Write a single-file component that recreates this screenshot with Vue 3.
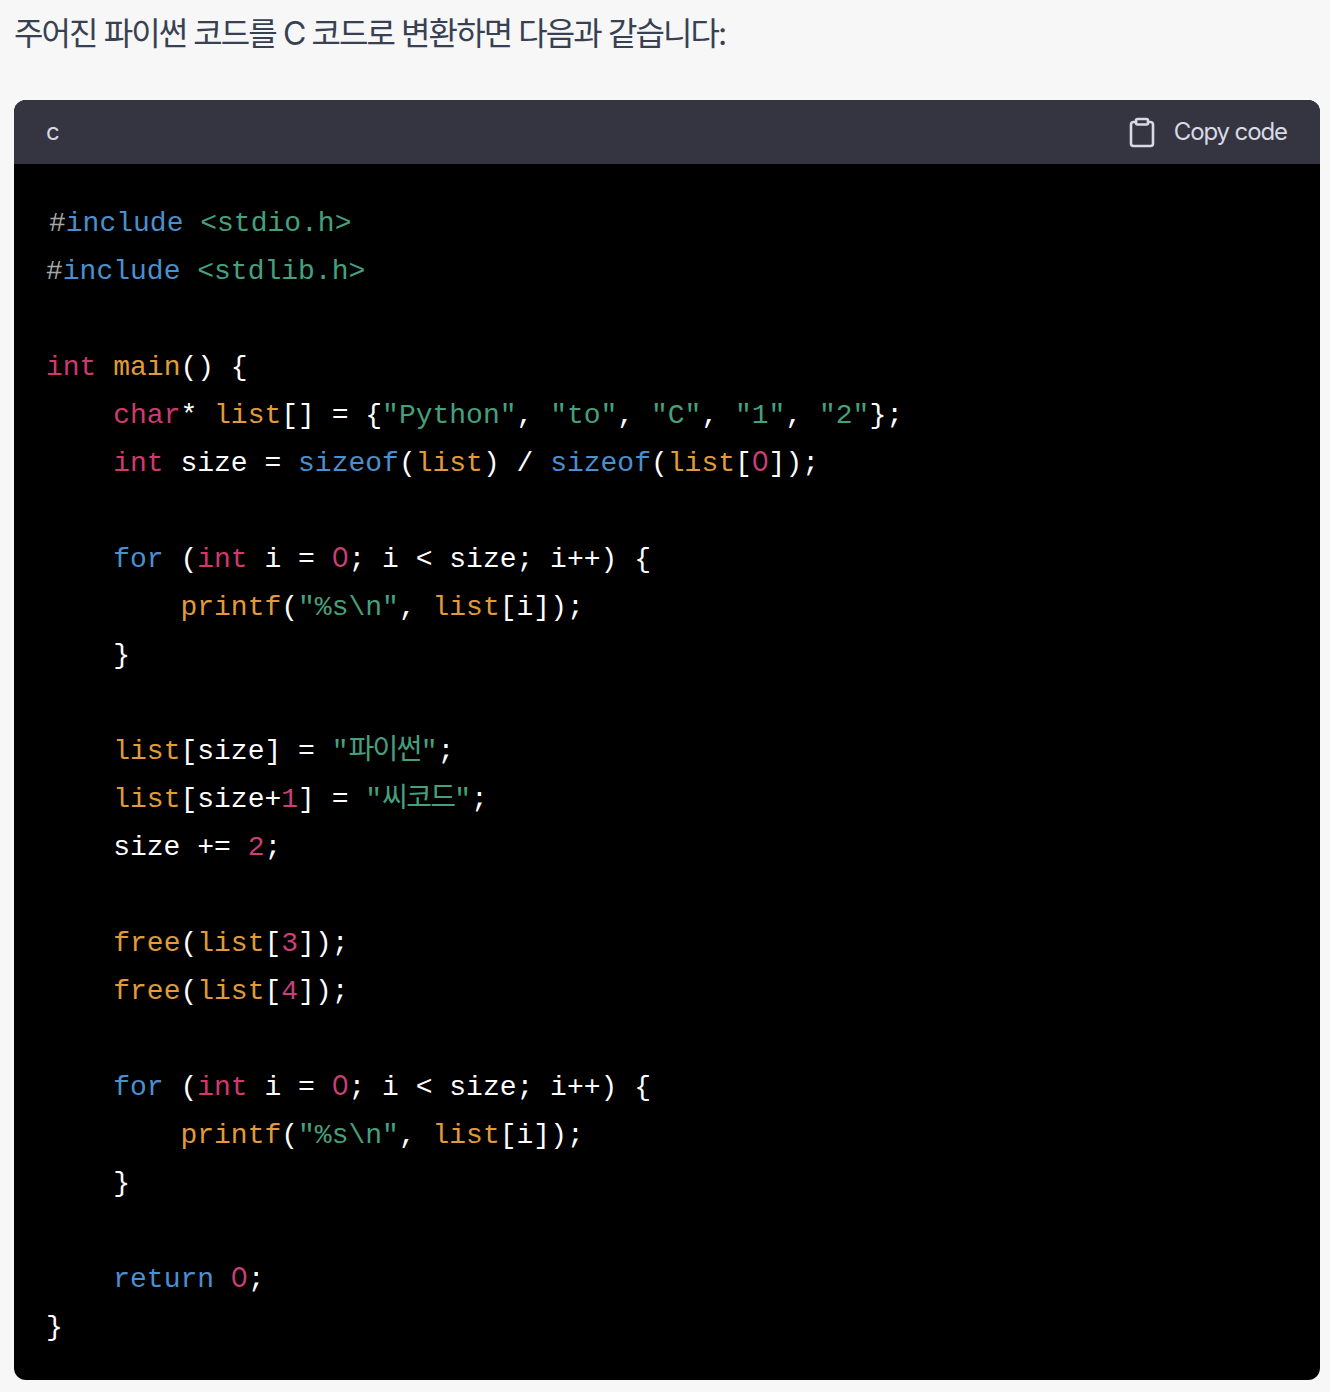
<script setup>
const lines = [
  [['m','#'],['k','include'],['p',' '],['s','<stdio.h>']],
  [['m','#'],['k','include'],['p',' '],['s','<stdlib.h>']],
  [],
  [['r','int'],['p',' '],['o','main'],['p','() {']],
  [['p','    '],['r','char'],['p','* '],['o','list'],['p','[] = {'],['s','"Python"'],['p',', '],['s','"to"'],['p',', '],['s','"C"'],['p',', '],['s','"1"'],['p',', '],['s','"2"'],['p','};']],
  [['p','    '],['r','int'],['p',' size = '],['k','sizeof'],['p','('],['o','list'],['p',') / '],['k','sizeof'],['p','('],['o','list'],['p','['],['n z','0'],['p',']);']],
  [],
  [['p','    '],['k','for'],['p',' ('],['r','int'],['p',' i = '],['n z','0'],['p','; i < size; i++) {']],
  [['p','        '],['o','printf'],['p','('],['s','"%s\\n"'],['p',', '],['o','list'],['p','[i]);']],
  [['p','    }']],
  [],
  [['p','    '],['o','list'],['p','[size] = '],['s','"'],['s ko','파이썬'],['s','"'],['p',';']],
  [['p','    '],['o','list'],['p','[size+'],['n','1'],['p','] = '],['s','"'],['s ko','씨코드'],['s','"'],['p',';']],
  [['p','    size += '],['n','2'],['p',';']],
  [],
  [['p','    '],['o','free'],['p','('],['o','list'],['p','['],['n','3'],['p',']);']],
  [['p','    '],['o','free'],['p','('],['o','list'],['p','['],['n','4'],['p',']);']],
  [],
  [['p','    '],['k','for'],['p',' ('],['r','int'],['p',' i = '],['n z','0'],['p','; i < size; i++) {']],
  [['p','        '],['o','printf'],['p','('],['s','"%s\\n"'],['p',', '],['o','list'],['p','[i]);']],
  [['p','    }']],
  [],
  [['p','    '],['k','return'],['p',' '],['n z','0'],['p',';']],
  [['p','}']],
]
</script>

<template>
  <div class="page">
    <p class="intro">주어진 파이썬 코드를 C 코드로 변환하면 다음과 같습니다:</p>
    <div class="block">
      <div class="head">
        <span class="lang">c</span>
        <span class="copy">
          <svg width="26" height="31" viewBox="0 0 26 31" fill="none" stroke="currentColor" stroke-width="2.600" stroke-linejoin="round" stroke-linecap="round">
            <path d="M7 5H4.500A2.500 2.500 0 0 0 2 7.500V26.500A2.500 2.500 0 0 0 4.500 29H21.500A2.500 2.500 0 0 0 24 26.500V7.500A2.500 2.500 0 0 0 21.500 5H19"/>
            <rect x="7" y="2" width="12" height="5.500" rx="1.500"/>
          </svg>
          Copy code
        </span>
      </div>
      <div class="code">
        <div v-for="(line, i) in lines" :key="i" class="line" :class="{ first: i === 0 }"><span v-for="(t, j) in line" :key="j" :class="t[0]">{{ t[1] }}</span></div>
      </div>
    </div>
  </div>
</template>

<style>
html, body { margin: 0; background: #f7f7f8; }
</style>

<style scoped>
.page { width: 1330px; height: 1392px; box-sizing: border-box; padding: 0 10px 0 14px; background: #f7f7f8; overflow: hidden; }
.intro { margin: 0; height: 100px; box-sizing: border-box; padding-top: 15px; font: 32px/38px Inter, "Noto Sans CJK KR", sans-serif; letter-spacing: -1.92px; color: #374151; white-space: nowrap; }
.block { border-radius: 12px; overflow: hidden; background: #000; height: 1280px; }
.head { height: 64px; box-sizing: border-box; background: #343541; color: #d9d9e3; display: flex; align-items: center; justify-content: space-between; padding: 0 32px; font: 24px/32px Inter, "Noto Sans CJK KR", sans-serif; }
.copy { display: flex; align-items: center; gap: 19px; letter-spacing: -1.1px; margin-right: 1px; }
.copy svg { margin-top: 1px; }
.code { padding: 36px 0 0 32px; font: 28px/48px "Liberation Mono", "Noto Sans CJK KR", monospace; color: #fff; white-space: pre; }
.line { height: 48px; }
.first { padding-left: 3px; }
.m { color: #a6a6a6; }
.k { color: #4a90cf; }
.s { color: #46a07d; }
.ko { letter-spacing: -1.7px; }
.r { color: #cf3a6e; }
.o { color: #e09b3c; }
.n { color: #c93f76; }
.z { display: inline-block; width: 16.8px; line-height: 1; text-align: center; font-family: Inter, sans-serif; font-size: 27px; font-weight: 400; }
.p { color: #fff; }
</style>
